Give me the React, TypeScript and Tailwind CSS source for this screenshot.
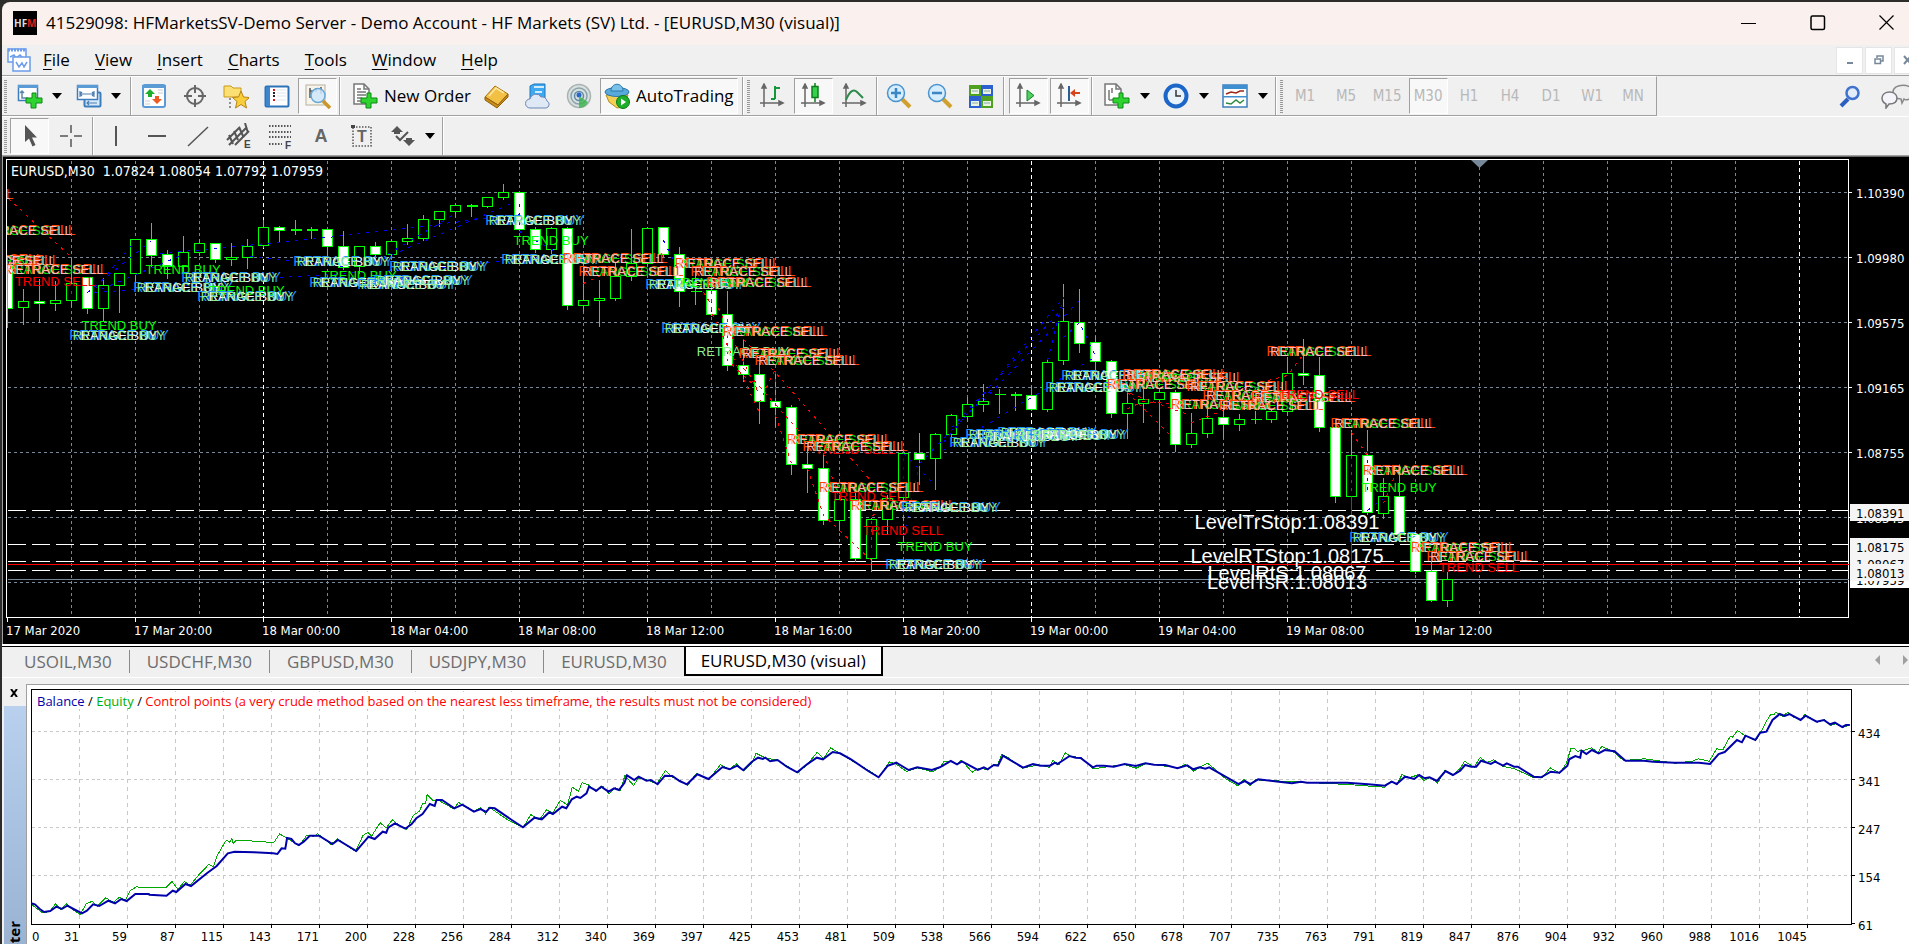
import type { ReactNode } from 'react';

type Candle = [number, number, number, number, number, string];
type Mark = [string, number, number];

// x, high, body top, body bottom, low, kind (w = filled, h = hollow, d = doji)
const candles: Candle[] = [
  [7, 255, 265, 308, 326, 'w'], [23, 288, 301, 307, 323, 'h'], [39, 278, 301, 303, 321, 'w'], [55, 280, 300, 303, 309, 'h'],
  [71, 257, 283, 300, 305, 'h'], [87, 277, 277, 308, 312, 'w'], [103, 277, 285, 308, 319, 'h'], [119, 272, 273, 285, 311, 'h'],
  [135, 238, 239, 273, 285, 'h'], [151, 222, 239, 255, 265, 'w'], [167, 249, 254, 266, 277, 'w'], [183, 235, 252, 266, 271, 'h'],
  [199, 238, 243, 252, 254, 'h'], [215, 243, 243, 259, 261, 'w'], [231, 242, 257, 259, 264, 'h'], [247, 238, 246, 257, 267, 'h'],
  [263, 219, 227, 245, 246, 'h'], [279, 225, 227, 230, 241, 'w'], [295, 219, 229, 230, 233, 'd'], [311, 226, 229, 230, 237, 'd'],
  [327, 227, 229, 246, 258, 'w'], [343, 230, 246, 267, 268, 'w'], [359, 246, 246, 266, 272, 'h'], [375, 241, 246, 254, 257, 'w'],
  [391, 238, 241, 254, 257, 'h'], [407, 223, 238, 241, 243, 'h'], [423, 214, 219, 238, 239, 'h'], [439, 210, 211, 219, 225, 'h'],
  [455, 202, 205, 211, 215, 'h'], [471, 203, 205, 206, 215, 'd'], [487, 196, 197, 206, 206, 'h'], [503, 183, 192, 197, 198, 'h'],
  [519, 192, 192, 229, 230, 'w'], [535, 226, 229, 249, 251, 'w'], [551, 226, 228, 249, 252, 'h'], [567, 226, 228, 305, 308, 'w'],
  [583, 262, 300, 305, 310, 'h'], [599, 279, 298, 300, 325, 'h'], [615, 262, 276, 298, 299, 'h'], [631, 228, 263, 276, 279, 'h'],
  [647, 226, 228, 263, 265, 'h'], [663, 227, 227, 254, 255, 'w'], [679, 246, 254, 291, 305, 'w'], [695, 272, 291, 291, 303, 'd'],
  [711, 277, 290, 314, 314, 'w'], [727, 290, 314, 365, 369, 'w'], [743, 339, 365, 374, 380, 'w'], [759, 362, 374, 401, 422, 'w'],
  [775, 370, 401, 407, 425, 'w'], [791, 404, 407, 464, 473, 'w'], [807, 448, 464, 468, 491, 'w'], [823, 453, 468, 520, 523, 'w'],
  [839, 494, 499, 520, 529, 'h'], [855, 492, 499, 558, 560, 'w'], [871, 517, 519, 558, 570, 'h'], [887, 494, 498, 519, 532, 'h'],
  [903, 452, 453, 497, 541, 'h'], [919, 432, 453, 459, 483, 'w'], [935, 432, 434, 458, 488, 'h'], [951, 413, 415, 434, 439, 'h'],
  [967, 396, 404, 416, 420, 'h'], [983, 383, 401, 404, 410, 'h'], [999, 388, 394, 394, 412, 'd'], [1015, 391, 394, 395, 409, 'd'],
  [1031, 384, 395, 409, 409, 'w'], [1047, 358, 362, 409, 410, 'h'], [1063, 283, 321, 360, 363, 'h'], [1079, 288, 322, 343, 351, 'w'],
  [1095, 335, 342, 361, 375, 'w'], [1111, 359, 361, 413, 416, 'w'], [1127, 390, 403, 413, 437, 'h'], [1143, 388, 399, 403, 421, 'h'],
  [1159, 390, 392, 399, 432, 'h'], [1175, 389, 392, 444, 450, 'w'], [1191, 412, 433, 444, 446, 'h'], [1207, 403, 418, 433, 436, 'h'],
  [1223, 407, 417, 424, 436, 'w'], [1239, 413, 419, 424, 429, 'h'], [1255, 410, 419, 419, 422, 'd'], [1271, 408, 411, 419, 421, 'h'],
  [1287, 356, 373, 411, 414, 'h'], [1303, 338, 373, 375, 383, 'w'], [1319, 356, 375, 427, 430, 'w'], [1335, 427, 427, 496, 501, 'w'],
  [1351, 429, 455, 496, 551, 'h'], [1367, 429, 455, 512, 513, 'w'], [1383, 477, 496, 513, 517, 'h'], [1399, 463, 496, 534, 534, 'w'],
  [1415, 530, 534, 571, 572, 'w'], [1431, 560, 571, 600, 600, 'w'], [1447, 571, 579, 600, 605, 'h'],
];

// B / S = stacked buy / sell signals, TB / TS = trend, RB = single retrace buy
const marks: Mark[] = [
  ['S', -39, 199], ['S', 23, 235], ['S', -9, 264], ['S', 7, 265], ['S', 55, 274], ['TS', 55, 286],
  ['TB', 119, 330], ['B', 119, 340], ['B', 183, 292], ['TB', 183, 274], ['B', 231, 282], ['TB', 247, 295], ['B', 247, 301],
  ['B', 343, 266], ['TB', 359, 280], ['B', 359, 287], ['B', 407, 289], ['B', 423, 285], ['B', 439, 271],
  ['B', 535, 225], ['TB', 551, 245], ['B', 551, 264], ['S', 615, 263], ['S', 631, 276], ['B', 695, 289], ['TB', 711, 287],
  ['S', 727, 268], ['S', 743, 276], ['S', 759, 287], ['B', 711, 333], ['S', 775, 336], ['RB', 743, 356], ['S', 791, 358], ['S', 807, 365],
  ['S', 839, 444], ['TS', 855, 454], ['S', 855, 451], ['TS', 871, 501], ['S', 871, 492], ['S', 903, 510], ['B', 951, 512],
  ['TS', 903, 535], ['TB', 935, 551], ['B', 935, 569],
  ['B', 999, 447], ['B', 1015, 439], ['B', 1031, 441], ['B', 1047, 437], ['B', 1063, 440], ['B', 1079, 439],
  ['B', 1111, 380], ['B', 1095, 392], ['S', 1159, 389], ['S', 1191, 382], ['S', 1175, 379], ['S', 1239, 391], ['S', 1223, 409],
  ['S', 1271, 410], ['S', 1255, 400], ['S', 1303, 402], ['TS', 1319, 399], ['S', 1319, 356], ['S', 1383, 428], ['S', 1415, 475],
  ['TB', 1399, 492], ['B', 1399, 542], ['S', 1463, 552], ['S', 1479, 561], ['TS', 1479, 572],
];

const blueTrades =
  'M87 292L151 240M95 288L135 240M93 292L183 254M95 292L215 283M160 253L215 248L327 237L519 214M387 254L455 213M383 258L513 202M250 256L343 266M280 277L440 267L551 255M519 203V228M519 231L553 250M663 240L679 272M711 290V314M903 457V537L919 463M903 453L935 485M919 463L990 390M943 442L1063 297M951 427L1063 307M983 400L1079 300M943 450L1031 397L1095 356M1047 360L1063 297M1063 337L1079 322L1095 356M1367 450V490M1367 510L1383 498';
const redTrades =
  'M8 198L71 257M71 290V296M583 283L617 267M695 278L711 305M711 290V312L759 412M718 308L759 395M727 318V360L759 390M743 339L775 372L870 480M759 402L775 368V407M743 368L807 440M775 415L791 463M823 453L840 500M807 468L823 515L871 560M871 547V517L887 497M1127 392L1173 438M1130 393L1190 415M1127 408L1143 401L1190 405M1191 422L1223 410M1268 380L1287 375L1302 355M1351 432L1367 455M1351 455V520M1383 503L1399 463';

const range = (from: number, to: number, step: number) =>
  Array.from({ length: Math.floor((to - from) / step) + 1 }, (_, i) => from + i * step);

const dates = [
  '17 Mar 2020', '17 Mar 20:00', '18 Mar 00:00', '18 Mar 04:00', '18 Mar 08:00', '18 Mar 12:00',
  '18 Mar 16:00', '18 Mar 20:00', '19 Mar 00:00', '19 Mar 04:00', '19 Mar 08:00', '19 Mar 12:00',
];
const prices = ['1.10390', '1.09980', '1.09575', '1.09165', '1.08755', '1.08345'];

const scaleFont = "font-['DejaVu_Sans_Condensed','DejaVu_Sans',sans-serif]";
const uiFont = "font-['Open_Sans','Noto_Sans',sans-serif]";

const Signal = ({ mark: [kind, x, y] }: { mark: Mark }) => {
  if (kind === 'TB') return <text x={x} y={y} fill="#00ff00">TREND BUY</text>;
  if (kind === 'TS') return <text x={x} y={y} fill="#ff0000">TREND SELL</text>;
  if (kind === 'RB') return <text x={x} y={y} fill="#90ee90">RETRACE BUY</text>;
  if (kind === 'B')
    return (
      <>
        <text x={x} y={y} fontSize={14} fill="#1e90ff">RETRACE BUY</text>
        <text x={x} y={y} fill="#ffffff">RANGE BUY</text>
        <text x={x} y={y} fill="#90ee90">RETRACE BUY</text>
      </>
    );
  return (
    <>
      <text x={x} y={y} fontSize={14} fill="#ff4500">RETRACE SELL</text>
      <text x={x} y={y} fill="#00e000">RANGE SELL</text>
      <text x={x} y={y} fill="#ffb6c1">RETRACE SELL</text>
    </>
  );
};

const PriceChart = () => (
  <svg viewBox="3 157 1906 487" className={`block h-auto w-full bg-black text-[13px] ${scaleFont}`} role="img" aria-label="EURUSD M30 chart">
    <g transform="translate(.5 .5)" shapeRendering="crispEdges" fill="none">
      <g stroke="#778899" strokeDasharray="3 3">
        {range(192, 582, 65).map((y) => <path key={y} d={`M7 ${y}H1848`} />)}
        {range(71, 1799, 64).map((x) => (
          <path key={x} d={`M${x} 160V617`} stroke={(x - 263) % 768 === 0 ? '#fff' : '#778899'} strokeDasharray={(x - 263) % 768 === 0 ? '4 3' : '3 3'} />
        ))}
      </g>
      <path d="M6 617V159H1848V617Z" stroke="#fff" />
      {range(7, 1415, 128).map((x) => <path key={x} d={`M${x} 617V621`} stroke="#fff" />)}
      {range(192, 517, 65).map((y) => <path key={y} d={`M1848 ${y}H1851`} stroke="#fff" />)}
      {[510, 544, 561, 570].map((y) => <path key={y} d={`M7 ${y}H1848`} stroke="#fff" strokeDasharray="18 6" />)}
      <path d="M7 564H1848" stroke="#f00" />
      <path d="M7 579H1848" stroke="#778899" />
      <g stroke="#00ff00">
        {candles.map(([x, high, top, bottom, low, kind]) => (
          <g key={x}>
            <path d={`M${x} ${high}V${top}M${x} ${bottom}V${low + 1}`} />
            {kind === 'd' ? (
              <path d={`M${x - 5} ${top}H${x + 6}M${x - 5} ${bottom}H${x + 6}`} />
            ) : (
              <rect x={Math.max(x - 5, 7)} y={top} width={x < 12 ? 5 : 10} height={bottom - top} fill={kind === 'w' ? '#fff' : '#000'} />
            )}
          </g>
        ))}
      </g>
      <path d={blueTrades} stroke="#0000ff" strokeDasharray="3 6" />
      <path d={redTrades} stroke="#ff0000" strokeDasharray="3 5" />
      <path d="M1351 496V564" stroke="#f00" />
    </g>
    <path d="M1471 160h17l-8.500 8z" fill="#778899" />
    <clipPath id="plot"><rect x="7" y="160" width="1841" height="457" /></clipPath>
    <g clipPath="url(#plot)" textAnchor="middle" className="font-['Liberation_Sans',Arial,sans-serif]">
      {marks.map((mark, i) => <Signal key={i} mark={mark} />)}
      <g fill="#fff" fontSize={20}>
        <text x="1287" y="529">LevelTrStop:1.08391</text>
        <text x="1287" y="563">LevelRTStop:1.08175</text>
        <text x="1287" y="580">LevelRtS:1.08067</text>
        <text x="1287" y="589">LevelTsR:1.08013</text>
      </g>
    </g>
    <g fill="#fff">
      <text x="11" y="176" fontSize={14} xmlSpace="preserve">EURUSD,M30  1.07824 1.08054 1.07792 1.07959</text>
      {dates.map((date, i) => <text key={date} x={6 + i * 128} y="635">{date}</text>)}
      {prices.map((price, i) => <text key={price} x="1856" y={198 + i * 65}>{price}</text>)}
    </g>
    {([['1.07959', 571, '#fff'], ['1.08391', 504, '#f5f5f5'], ['1.08175', 538, '#f5f5f5'], ['1.08067', 555, '#f5f5f5'], ['1.08013', 564, '#f5f5f5']] as [string, number, string][]).map(([label, y, fill]) => (
      <g key={label}>
        <rect x="1850" y={y} width="59" height="17" fill={fill} />
        <text x="1856" y={y + 14} fill="#000">{label}</text>
      </g>
    ))}
  </svg>
);

// Tester samples: x in 1/1.633 px, y in 1/3 px
const toPoints = (samples: string, shift = 0) =>
  samples
    .split(' ')
    .map((pair) => {
      const [x, y] = pair.split(',').map(Number);
      return `${((x + shift) / 1.6333).toFixed(1)},${(590 + y / 3).toFixed(1)}`;
    })
    .join(' ');

const balance =
  toPoints('51,940 57,943 65,957 72,966 82,963 92,950 101,957 110,947 120,957 134,970 142,962 152,943 162,948 177,932 188,940 198,927 207,933 221,912 243,912 244,914 272,917 282,902 288,906 303,882 312,888 338,850 354,828 372,790 383,785 415,787 446,790 453,792 460,775 466,776 469,744 476,747 482,760 488,765 496,755 506,737 521,737 543,762 552,750 582,783 602,740 612,747 625,725 631,728 634,713 645,700 662,716 672,703 680,685 690,672 702,642 710,648 713,630 722,630 742,655 755,644 774,665 785,657 794,666 800,653 808,655 836,690 854,712 873,683 885,688 897,667 903,672 918,650 925,655 934,628 942,620 948,624 958,610 962,590 974,602 982,590 994,605 1003,595 1011,600 1020,578 1024,556 1036,570 1043,560 1056,572 1063,570 1074,583 1086,557 1098,558 1110,573 1122,583 1139,553 1157,567 1180,531 1192,538 1204,527 1214,541 1228,515 1238,503 1246,507 1250,503 1258,514 1270,510 1285,530 1302,547 1318,523 1334,503 1344,508 1360,486 1372,490 1390,508 1418,543 1435,562 1450,527 1464,518 1484,540 1498,532 1522,540') +
  ' ' +
  toPoints('0,532 18,513 28,523 36,514 62,540 72,532 78,538 88,525 95,527 103,497 136,533 152,522 165,527 180,527 188,518 192,522 212,498 222,503 230,504 250,532 256,527 268,527 284,530 302,522 320,528 336,520 350,524 368,525 388,535 404,526 414,538 424,532 434,536 440,532 488,582 498,573 507,582 520,568 540,572 575,580 590,575 600,578 665,578 700,583 727,587 738,575 746,582 760,560 775,567 783,555 792,565 800,562 812,573 826,543 838,555 850,542 858,525 868,530 876,530 884,512 900,522 907,515 920,527 926,520 938,530 944,530 970,560 982,562 998,545 1012,548 1025,527 1028,508 1038,498 1046,503 1048,482 1056,492 1065,480 1076,490 1086,480 1102,484 1120,512 1150,512 1165,515 1200,518 1240,518 1258,522 1272,492 1282,486 1302,450 1310,457 1316,437 1332,450 1340,428 1350,425 1360,390 1372,372 1380,378 1388,372 1406,390 1414,377 1432,395 1444,390 1454,403 1462,398 1474,411 1480,405 1486,405', 1535);
const equity =
  toPoints('51,942 68,966 80,964 90,940 98,957 108,940 118,957 130,972 140,940 150,932 158,947 172,922 184,936 194,920 204,930 212,900 222,889 230,891 270,891 280,873 290,897 300,873 310,884 322,857 340,822 348,828 354,795 366,757 370,748 374,756 378,743 380,758 384,751 410,751 414,754 420,752 446,757 456,730 462,737 474,750 488,765 500,735 512,737 518,730 540,762 550,745 580,783 592,735 600,725 606,737 620,697 630,712 640,688 652,706 664,716 674,675 684,662 690,638 694,640 697,612 706,630 716,630 740,655 748,636 760,648 774,662 784,652 792,670 798,650 830,690 854,710 866,672 880,688 892,658 902,668 914,630 926,643 934,590 944,602 950,577 960,583 972,602 984,588 994,610 1004,592 1012,600 1020,555 1034,585 1042,562 1058,570 1072,580 1086,540 1096,558 1110,570 1122,585 1136,550 1157,567 1176,522 1190,537 1202,520 1214,541 1228,515 1234,488 1250,503 1268,508 1302,547 1316,525 1334,485 1344,505 1356,472 1370,488 1418,540 1435,560 1452,514 1462,520 1480,543 1498,532 1522,544') +
  ' ' +
  toPoints('0,530 6,512 18,513 28,520 34,508 52,545 64,533 78,538 88,522 94,522 100,492 112,503 134,533 160,523 178,530 184,510 194,522 204,487 212,497 230,502 250,535 300,522 320,533 336,518 370,528 390,532 400,522 414,542 424,530 436,518 446,532 466,565 486,586 496,567 506,586 514,568 560,572 665,582 726,590 736,573 746,582 754,552 766,562 780,553 790,570 800,560 812,578 824,540 838,552 850,532 856,512 872,530 882,500 892,517 904,508 918,527 938,535 970,562 984,560 996,532 1012,548 1022,520 1030,475 1036,474 1040,482 1050,480 1064,472 1074,487 1080,468 1098,482 1116,510 1150,505 1200,518 1228,512 1238,505 1256,512 1268,475 1278,478 1290,438 1294,440 1302,420 1314,435 1332,450 1340,425 1350,390 1356,373 1362,373 1364,365 1376,378 1384,365 1394,380 1406,388 1412,372 1432,395 1444,388 1454,405 1462,400 1474,411 1486,403', 1535);

const trades = [
  31, 59, 87, 115, 143, 171, 200, 228, 256, 284, 312, 340, 369, 397, 425, 453, 481, 509, 538, 566, 594, 622, 650, 678,
  707, 735, 763, 791, 819, 847, 876, 904, 932, 960, 988, 1016, 1045,
];

const TesterGraph = () => (
  <svg viewBox="27 685 1882 259" className={`block h-auto w-full bg-white text-[13px] ${scaleFont}`} role="img" aria-label="Balance and equity">
    <g transform="translate(.5 .5)" shapeRendering="crispEdges" fill="none">
      {range(79, 1807, 48).map((x) => (
        <g key={x}>
          <path d={`M${x} 690V924`} stroke="#c8c8c8" strokeDasharray="4 4" />
          <path d={`M${x} 924V927`} stroke="#000" />
        </g>
      ))}
      {range(731, 875, 48).map((y) => (
        <g key={y}>
          <path d={`M31 ${y}H1851`} stroke="#c8c8c8" strokeDasharray="3 3" />
          <path d={`M1851 ${y}H1854`} stroke="#000" />
        </g>
      ))}
      <path d="M1851 923H1854" stroke="#000" />
      <rect x="31" y="689" width="1820" height="235" stroke="#000" />
      <polyline points={equity} stroke="#00aa00" />
    </g>
    <polyline points={balance} fill="none" stroke="#0000aa" strokeWidth="2" />
    <rect x="36" y="692" width="786" height="17" fill="#fff" />
    <text x="37" y="706" xmlSpace="preserve" className={uiFont}>
      <tspan fill="#0000aa">Balance</tspan> / <tspan fill="#00b000">Equity</tspan> / <tspan fill="#ff0000">Control points (a very crude method based on the nearest less timeframe, the results must not be considered)</tspan>
    </text>
    <text x="32" y="941">0</text>
    {trades.map((n, i) => <text key={n} x={79 + i * 48} y="941" textAnchor="end">{n}</text>)}
    {[434, 341, 247, 154, 61].map((n, i) => <text key={n} x="1858" y={738 + i * 48}>{n}</text>)}
  </svg>
);

const Icon = ({ children }: { children: ReactNode }) => (
  <svg viewBox="0 0 26 26" className="h-[26px] w-[26px] shrink-0" fill="none" aria-hidden="true">{children}</svg>
);

const plus = <path d="M15 10h4v5h6v5h-6v5h-5v-5H9v-5h6z" fill="#2fd32f" stroke="#0a8a14" strokeLinejoin="round" />;
const axes = <path d="M5 2v22M1 20h22M5 1L3 5h4zM24 20l-4-2v4z" stroke="#666" strokeWidth="1.500" fill="#666" />;

const icons = {
  newChart: <Icon><rect x="1.500" y="2.500" width="19" height="15" fill="#fff" stroke="#3c7ebd" strokeWidth="1.500" /><path d="M1 2h20v3H1z" fill="#5b9bd5" /><path d="M5 8v7h6M3 10l2-2 2 2" stroke="#5d86aa" strokeWidth="1.500" />{plus}</Icon>,
  profiles: <Icon><rect x="8.500" y="9.500" width="16" height="14" rx="1" fill="#d7eafa" stroke="#3c7ebd" strokeWidth="2" /><rect x="1.500" y="2.500" width="20" height="14" fill="#fff" stroke="#3c7ebd" strokeWidth="1.500" /><path d="M1 2h21v3H1z" fill="#5b9bd5" /><path d="M4 8v6M18 8v6M4 11h14M6 9l-2 2 2 2M16 9l2 2-2 2M11 20h10M13 18l-2 2 2 2" stroke="#4d7fae" strokeWidth="1.200" /></Icon>,
  market: <Icon><rect x="2" y="2" width="22" height="22" rx="2" fill="#fff" stroke="#5b9bd5" strokeWidth="2" /><path d="M1 2h24v3H1z" fill="#5b9bd5" /><path d="M9 6l5 5h-3v3H7v-3H4z" fill="#1fae2b" /><path d="M16 21l-5-5h3v-3h4v3h3z" fill="#ee5a24" /><path d="M17 7h5M17 10h5M4 18h5M4 21h5" stroke="#ccc" /></Icon>,
  navigator: <Icon><circle cx="13" cy="13" r="8" stroke="#666" strokeWidth="2" /><path d="M13 2v8M13 16v8M2 13h8M16 13h8" stroke="#666" strokeWidth="2" /></Icon>,
  favourites: <Icon><path d="M1 3h7l2 2h8v9H1z" fill="#fbdf72" stroke="#c79a1c" /><path d="M7 15v10" stroke="#333" strokeDasharray="2 2" /><path d="M18 8l2.500 6 6 .5-4.500 4 1.500 6.500-5.500-3.500L12.500 25 14 18.500l-4.500-4 6-.5z" fill="#f8cf3a" stroke="#b88312" /></Icon>,
  terminal: <Icon><rect x="1.500" y="3.500" width="23" height="20" rx="1" fill="#fff" stroke="#2c72b8" strokeWidth="2" /><path d="M2 4h4v19H2z" fill="#3b86cc" /><path d="M9 7h2M9 17h2" stroke="#e01818" strokeWidth="2" /><path d="M9 10h2M9 13h2" stroke="#222" strokeWidth="2" /><path d="M13 7h9M13 10h9M13 13h9M13 17h9" stroke="#dbe6f0" /></Icon>,
  tester: <Icon><rect x="1" y="2" width="19" height="20" fill="#f6f4ec" stroke="#b9b09a" /><path d="M5 5v10M5 8h4M11 5v4M16 4v7" stroke="#555" strokeWidth="1.500" /><circle cx="13" cy="12.500" r="7" fill="#cfe8fb" fillOpacity=".85" stroke="#6aa7d6" strokeWidth="1.500" /><path d="M18 18l7 7" stroke="#c9962a" strokeWidth="3.500" /></Icon>,
  newOrder: <Icon><path d="M2 1h10l5 5v15H2z" fill="#fff" stroke="#777" strokeWidth="1.500" /><path d="M12 1v5h5M5 6h4M5 9h9M5 12h9M5 15h5M5 18h4" stroke="#777" strokeWidth="1.500" />{plus}</Icon>,
  book: <Icon><path d="M1 14L11 3l13 8-10 11z" fill="#f2c044" stroke="#a8740f" /><path d="M1 14v3l12 8 11-11v-3L14 22z" fill="#c98c1b" stroke="#8f5f0c" /><path d="M5 13l7-8 8 5" stroke="#fbe7a3" strokeWidth="1.500" /></Icon>,
  vps: <Icon><path d="M5 3l4-2h11v15H5z" fill="#3fa9f0" stroke="#1d77c0" /><path d="M9 4h10M10 9h7" stroke="#d3ecfd" strokeWidth="2" /><path d="M5 25a4.500 4.500 0 010-9 6 6 0 0111-2 5 5 0 016 4 3.700 3.700 0 01-1 7z" fill="#dfe8f5" stroke="#6d87b5" /></Icon>,
  signals: <Icon><circle cx="13" cy="13" r="11.500" fill="#d8e0e0" stroke="#a9b3b3" strokeWidth="1.500" /><circle cx="13" cy="13" r="8" stroke="#8aa3a8" strokeWidth="1.500" /><circle cx="13" cy="13" r="4.500" stroke="#5f8aa8" strokeWidth="1.500" /><circle cx="13" cy="12" r="2.500" fill="#2a66c8" /><path d="M13 13v12c4 0 8-3 9-6z" fill="#39b54a" fillOpacity=".8" /></Icon>,
  auto: <Icon><path d="M2 12h22l-4 12-7 1-8-6z" fill="#f3cf53" stroke="#b68e20" /><ellipse cx="13" cy="9" rx="12" ry="4.500" fill="#59a9da" stroke="#2b78aa" /><path d="M7 8c0-9 12-9 12 0z" fill="#79c1ea" stroke="#2b78aa" /><circle cx="19" cy="19" r="6.500" fill="#1fae2b" stroke="#0b7a16" /><path d="M17 15.500v7l5-3.500z" fill="#fff" /></Icon>,
  bars: <Icon>{axes}<path d="M16 3v13M16 5h5M12 16h4" stroke="#17963a" strokeWidth="2" /></Icon>,
  candle: <Icon>{axes}<path d="M15 0v19" stroke="#0c7d22" strokeWidth="1.500" /><rect x="12" y="3.500" width="6" height="11" fill="#36d04a" stroke="#0c7d22" strokeWidth="1.500" /></Icon>,
  line: <Icon>{axes}<path d="M5 17C9 7 13 6 16 9l6 6" stroke="#2e8b4b" strokeWidth="2" /></Icon>,
  zoomIn: <Icon><path d="M16 16l8 8" stroke="#d1a02c" strokeWidth="4" /><circle cx="10" cy="10" r="8.500" fill="#d5edfc" stroke="#4a93cf" strokeWidth="1.500" /><path d="M10 5v10M5 10h10" stroke="#3a87c4" strokeWidth="2.500" /></Icon>,
  zoomOut: <Icon><path d="M16 16l8 8" stroke="#d1a02c" strokeWidth="4" /><circle cx="10" cy="10" r="8.500" fill="#d5edfc" stroke="#4a93cf" strokeWidth="1.500" /><path d="M5 10h10" stroke="#3a87c4" strokeWidth="2.500" /></Icon>,
  tile: <Icon><path d="M1 2h12v11H1zM13 13h12v12H13z" fill="#4fa11f" /><path d="M13 2h12v11H13zM1 13h12v12H1z" fill="#2c5fd0" /><path d="M3 6h8v5H3zM15 6h8v5h-8zM3 18h8v5H3zM15 18h8v5h-8z" fill="#e9f3e2" /><path d="M4 8h6M16 8h6M4 20h6M16 20h6" stroke="#8aa" /></Icon>,
  scroll: <Icon>{axes}<path d="M12 7v11l7-5.500z" fill="#4fd05f" stroke="#16822a" /></Icon>,
  shift: <Icon>{axes}<path d="M13 3v15" stroke="#2a5f93" strokeWidth="2" /><path d="M14 10l5-4v3h5v2h-5v3z" fill="#d9451a" /></Icon>,
  template: <Icon><path d="M1 1h11l5 5v16H1z" fill="#fff" stroke="#777" strokeWidth="1.500" /><path d="M12 1v5h5M5 7v10M5 17h4M8 5v5" stroke="#777" strokeWidth="1.500" />{plus}</Icon>,
  clock: <Icon><circle cx="13" cy="13" r="10.500" fill="#e8f2fb" stroke="#1c66c8" strokeWidth="4" /><path d="M13 7v6h5" stroke="#333" strokeWidth="1.500" /></Icon>,
  indicators: <Icon><rect x="1" y="2" width="24" height="22" fill="#fff" stroke="#3c7ebd" strokeWidth="1.500" /><path d="M1 2h24v4H1zM1 13h24v1.500H1z" fill="#3f8fd0" /><path d="M4 11l5-2 5 1 4-2h4" stroke="#9c2a1a" strokeWidth="1.500" /><path d="M4 20l5 1 5-4 4 3 4-3" stroke="#2e8b3b" strokeWidth="1.500" /></Icon>,
  cursor: <Icon><path d="M8 2v17l4-3.500 3.500 8 3-1.500-3.500-7.500h5z" fill="#555" /></Icon>,
  cross: <Icon><path d="M13 2v8M13 16v8M2 13h8M16 13h8" stroke="#555" strokeWidth="1.500" /></Icon>,
  vline: <Icon><path d="M13 3v20" stroke="#555" strokeWidth="2" /></Icon>,
  hline: <Icon><path d="M4 13h18" stroke="#555" strokeWidth="2" /></Icon>,
  trend: <Icon><path d="M3 23L23 4" stroke="#555" strokeWidth="1.500" /></Icon>,
  channel: <Icon><path d="M1 17L14 4M3 22L21 4M9 22L23 8M3 12l4 9M8 8l4 9M13 4l4 9M19 0l3 10" stroke="#555" strokeWidth="2" /><path d="M17 15h9v11h-9z" fill="#f0f0f0" /><text x="18" y="25" fontSize="10" fontWeight="700" fill="#444">E</text></Icon>,
  fibo: <Icon><path d="M2 3h22M2 9h22M2 14h22M2 21h13" stroke="#555" strokeWidth="2" strokeDasharray="1.500 1.500" /><text x="18" y="26" fontSize="10" fontWeight="700" fill="#444">F</text></Icon>,
  letter: <Icon><text x="13" y="19" textAnchor="middle" fontSize="18" fontWeight="700" fill="#666">A</text></Icon>,
  label: <Icon><rect x="4" y="4" width="18" height="19" stroke="#555" strokeWidth="1.500" strokeDasharray="1.500 1.500" /><rect x="2" y="2" width="4" height="3" fill="#444" /><text x="13" y="19" textAnchor="middle" fontSize="16" fontWeight="700" fill="#666">T</text></Icon>,
  shapes: <Icon><path d="M7 3l6 6h-3v2H4V9H1zM19 23l-6-6h3v-2h6v2h3z" fill="#555" /><path d="M6 13l4 4 8-8" stroke="#555" strokeWidth="2" /></Icon>,
};

const ToolButton = ({ icon, label, pressed, text }: { icon: ReactNode; label: string; pressed?: boolean; text?: boolean }) => (
  <button
    type="button"
    aria-label={label}
    aria-pressed={pressed}
    className={`mx-px flex h-[36px] shrink-0 items-center justify-center border ${text ? 'gap-[6px] px-[3px]' : 'w-[39px]'} ${
      pressed ? 'border-t-[#a0a0a0] border-r-white border-b-white border-l-[#a0a0a0] bg-[#f8f8f8]' : 'border-transparent'
    }`}
  >
    {icon}
    {text && <span className="text-[17px] whitespace-nowrap">{label}</span>}
  </button>
);

const Caret = ({ label }: { label: string }) => (
  <button type="button" aria-label={label} className="mr-[4px] flex h-[36px] w-[14px] shrink-0 items-center justify-center">
    <svg viewBox="0 0 10 6" className="h-[6px] w-[10px]" aria-hidden="true"><path d="M0 0h10L5 6z" fill="#000" /></svg>
  </button>
);

const Divider = () => <div className="mx-px h-[38px] w-[2px] shrink-0 border-r border-l border-r-white border-l-[#a0a0a0]" />;
const Handle = () => <div className="mx-[2px] h-[33px] w-[3px] shrink-0 bg-[repeating-linear-gradient(#999_0_1px,#f0f0f0_1px_2px)]" />;

const menus = ['File', 'View', 'Insert', 'Charts', 'Tools', 'Window', 'Help'];
const periods = ['M1', 'M5', 'M15', 'M30', 'H1', 'H4', 'D1', 'W1', 'MN'];
const tabs = ['USOIL,M30', 'USDCHF,M30', 'GBPUSD,M30', 'USDJPY,M30', 'EURUSD,M30'];

const TitleBar = () => (
  <header className="flex h-[43px] items-center rounded-tl-[8px] bg-[#faf0ed] pb-[2px] pl-[11px]">
    <svg viewBox="0 0 24 24" className="h-6 w-6" aria-hidden="true">
      <rect width="24" height="24" fill="#000" />
      <text x="1" y="16" fontSize="10" fontWeight="700" fill="#ddd">HF</text>
      <text x="14" y="16" fontSize="10" fontWeight="700" fill="#e02020">M</text>
    </svg>
    <h1 className="ml-[9px] text-[17px] whitespace-nowrap">41529098: HFMarketsSV-Demo Server - Demo Account - HF Markets (SV) Ltd. - [EURUSD,M30 (visual)]</h1>
    <div className="ml-auto flex">
      <button type="button" aria-label="Minimize" className="flex h-[41px] w-[69px] items-center justify-center">
        <svg viewBox="0 0 16 16" className="h-4 w-4"><path d="M0 8.500h15" stroke="#000" /></svg>
      </button>
      <button type="button" aria-label="Maximize" className="flex h-[41px] w-[69px] items-center justify-center">
        <svg viewBox="0 0 16 16" className="h-4 w-4"><rect x="1" y="1" width="13.500" height="13.500" rx="1.500" fill="none" stroke="#000" strokeWidth="1.500" /></svg>
      </button>
      <button type="button" aria-label="Close" className="mr-[-12px] flex h-[41px] w-[69px] items-center justify-center">
        <svg viewBox="0 0 16 16" className="h-4 w-4"><path d="M.5.5l14 14M14.500.5l-14 14" stroke="#000" strokeWidth="1.200" /></svg>
      </button>
    </div>
  </header>
);

const MenuBar = () => (
  <nav className="flex h-[30px] items-center pl-[5px] text-[17px]">
    <svg viewBox="0 0 24 24" className="h-6 w-6" fill="none" aria-hidden="true">
      <rect x="1" y="1" width="18" height="13" fill="#fff" stroke="#6b9bea" strokeWidth="1.500" />
      <path d="M1 2h18" stroke="#6b9bea" strokeWidth="3" strokeDasharray="2 1" />
      <path d="M3 9l4-2 2 3 4-3 3 3" stroke="#6b9bea" strokeWidth="1.500" />
      <rect x="6" y="9" width="17" height="14" fill="#fff" stroke="#6b9bea" strokeWidth="1.500" />
      <path d="M9 14l3 5 3-4 2 4 3-5" stroke="#6b9bea" strokeWidth="1.500" />
    </svg>
    <div className="ml-[12px] flex gap-[25px]">
      {menus.map((menu) => (
        <button key={menu} type="button">
          <span className="underline underline-offset-[3px]">{menu[0]}</span>{menu.slice(1)}
        </button>
      ))}
    </div>
    <div className="mr-[-12px] ml-auto flex gap-[2px] text-[#778899]">
      <button type="button" aria-label="Minimize chart" className="flex h-[27px] w-[27px] items-center justify-center border border-[#e5e5e5] bg-white">
        <svg viewBox="0 0 10 10" className="h-[10px] w-[10px]"><path d="M2 8h6" stroke="currentColor" strokeWidth="2" /></svg>
      </button>
      <button type="button" aria-label="Restore chart" className="flex h-[27px] w-[27px] items-center justify-center border border-[#e5e5e5] bg-white">
        <svg viewBox="0 0 10 10" className="h-[10px] w-[10px]" fill="none"><path d="M3 3V1h6v5H7" stroke="currentColor" strokeWidth="1.500" /><rect x="1" y="4" width="5.500" height="4.500" stroke="currentColor" strokeWidth="1.500" /></svg>
      </button>
      <button type="button" aria-label="Close chart" className="flex h-[27px] w-[27px] items-center justify-center border border-[#e5e5e5] bg-white">
        <svg viewBox="0 0 10 10" className="h-[10px] w-[10px]"><path d="M1 1l7 8M8 1L1 9" stroke="currentColor" strokeWidth="2" /></svg>
      </button>
    </div>
  </nav>
);

const MainToolbar = () => (
  <div className="flex h-[41px] border-t border-[#a0a0a0]">
    <div className="flex items-center border-t border-r border-b border-t-white border-r-[#a0a0a0] border-b-[#a0a0a0]">
      <Handle />
      <div className="flex items-center">
        <ToolButton icon={icons.newChart} label="New chart" />
        <Caret label="New chart list" />
        <ToolButton icon={icons.profiles} label="Profiles" />
        <Caret label="Profiles list" />
      </div>
      <div className="w-[2px]" />
      <Divider />
      <ToolButton icon={icons.market} label="Market watch" />
      <ToolButton icon={icons.navigator} label="Data window" />
      <ToolButton icon={icons.favourites} label="Navigator" />
      <ToolButton icon={icons.terminal} label="Terminal" />
      <ToolButton icon={icons.tester} label="Strategy tester" pressed />
      <Divider />
      <div className="w-[5px]" />
      <ToolButton icon={icons.newOrder} label="New Order" text />
      <ToolButton icon={icons.book} label="MetaEditor" />
      <ToolButton icon={icons.vps} label="Virtual hosting" />
      <ToolButton icon={icons.signals} label="Signals" />
      <ToolButton icon={icons.auto} label="AutoTrading" pressed text />
      <div className="w-[2px]" />
      <Divider />
      <Handle />
      <ToolButton icon={icons.bars} label="Bar chart" />
      <ToolButton icon={icons.candle} label="Candlesticks" pressed />
      <ToolButton icon={icons.line} label="Line chart" />
      <Divider />
      <ToolButton icon={icons.zoomIn} label="Zoom in" />
      <ToolButton icon={icons.zoomOut} label="Zoom out" />
      <ToolButton icon={icons.tile} label="Tile windows" />
      <Divider />
      <div className="w-[2px]" />
      <ToolButton icon={icons.scroll} label="Auto scroll" pressed />
      <ToolButton icon={icons.shift} label="Chart shift" pressed />
      <Divider />
      <div className="w-[3px]" />
      <ToolButton icon={icons.template} label="Indicators" />
      <Caret label="Indicators list" />
      <ToolButton icon={icons.clock} label="Periods" />
      <Caret label="Periods list" />
      <ToolButton icon={icons.indicators} label="Templates" />
      <Caret label="Templates list" />
      <Divider />
      <Handle />
      {periods.map((period) => (
        <button
          key={period}
          type="button"
          className={`mx-px h-[36px] w-[39px] border text-[15px] text-[#b8b8b8] ${scaleFont} ${
            period === 'M30' ? 'border-t-[#a0a0a0] border-r-white border-b-white border-l-[#a0a0a0] bg-[#f8f8f8]' : 'border-transparent'
          }`}
        >
          {period}
        </button>
      ))}
      <div className="w-[2px]" />
    </div>
    <div className="mr-[-4px] ml-auto flex items-center gap-[17px]">
      <button type="button" aria-label="Search">
        <Icon><path d="M10 16l-7 7" stroke="#2c5fc0" strokeWidth="4" /><circle cx="14.500" cy="10" r="6" fill="#e3edfa" stroke="#3f73cf" strokeWidth="2.500" /></Icon>
      </button>
      <button type="button" aria-label="Messages">
        <svg viewBox="0 0 32 26" className="h-[26px] w-8" fill="none">
          <path d="M12 9c0-9 20-9 20 0s-8 8-9 7l-2 4-1-4c-4 0-8-2-8-7z" fill="#eee" stroke="#888" strokeWidth="1.500" />
          <path d="M1 15c0-8 15-8 15 0 0 6-6 6-8 6l-3 4v-4c-2-1-4-3-4-6z" fill="#f4f4fa" stroke="#777" strokeWidth="1.500" />
        </svg>
      </button>
    </div>
  </div>
);

const DrawToolbar = () => (
  <div className={`flex h-[39px] items-center border-t border-white font-['Liberation_Sans',sans-serif]`}>
    <Handle />
    <ToolButton icon={icons.cursor} label="Cursor" pressed />
    <ToolButton icon={icons.cross} label="Crosshair" />
    <Divider />
    <ToolButton icon={icons.vline} label="Vertical line" />
    <ToolButton icon={icons.hline} label="Horizontal line" />
    <ToolButton icon={icons.trend} label="Trendline" />
    <ToolButton icon={icons.channel} label="Equidistant channel" />
    <ToolButton icon={icons.fibo} label="Fibonacci" />
    <ToolButton icon={icons.letter} label="Text" />
    <ToolButton icon={icons.label} label="Text label" />
    <ToolButton icon={icons.shapes} label="Arrows" />
    <Caret label="Arrows list" />
    <Divider />
  </div>
);

const ChartTabs = () => (
  <div className="flex h-[34px] border-t-2 border-b border-t-white border-b-white">
    <div className="flex flex-1 items-start border-t border-black pl-[5px] text-[17px] text-[#6d6d6d]">
      {tabs.map((tab, i) => (
        <button key={tab} type="button" className="flex h-[29px] items-center whitespace-nowrap">
          <span className={`px-[17px] leading-[23px] ${i < tabs.length - 1 ? 'border-r border-[#8a8a8a]' : ''}`}>{tab}</span>
        </button>
      ))}
      <button type="button" className="h-[29px] border-x-2 border-b-2 border-black bg-white px-[15px] leading-[27px] whitespace-nowrap text-black">
        EURUSD,M30 (visual)
      </button>
      <div className="ml-auto flex h-[26px] items-center gap-[23px] pr-px">
        <button type="button" aria-label="Scroll left"><svg viewBox="0 0 5 10" className="h-[10px] w-[5px]"><path d="M5 0v10L0 5z" fill="#a0a0a0" /></svg></button>
        <button type="button" aria-label="Scroll right"><svg viewBox="0 0 5 10" className="h-[10px] w-[5px]"><path d="M0 0v10l5-5z" fill="#a0a0a0" /></svg></button>
      </div>
    </div>
  </div>
);

const TesterPanel = () => (
  <section className="mt-[6px] flex">
    <div className="flex w-[24px] shrink-0 flex-col pl-[2px]">
      <button type="button" aria-label="Close tester" className="flex h-[22px] items-center justify-center pr-[2px] pb-[4px]">
        <svg viewBox="0 0 8 8" className="h-2 w-2"><path d="M1 0l6 8M7 0L1 8" stroke="#000" strokeWidth="2" /></svg>
      </button>
      <div className="flex flex-1 items-end overflow-hidden bg-linear-to-b from-[#b9d1ef] to-[#9ab3d3]">
        <span className="mb-[-24px] rotate-180 text-[15px] leading-[20px] font-bold [writing-mode:vertical-rl]">Tester</span>
      </div>
    </div>
    <div className="min-w-0 flex-1 border-t border-l border-[#a0a0a0]">
      <TesterGraph />
    </div>
  </section>
);

const App = () => (
  <div className={`min-h-screen overflow-hidden bg-[#2e2b2b] pt-[2px] pl-[2px] text-black ${uiFont}`}>
    <TitleBar />
    <main className="bg-[#f0f0f0]">
      <MenuBar />
      <MainToolbar />
      <DrawToolbar />
      <div className="border-t border-l border-[#a0a0a0]">
        <div className="border-t border-[#696969]">
          <PriceChart />
        </div>
      </div>
      <ChartTabs />
      <TesterPanel />
    </main>
  </div>
);

export default App;
